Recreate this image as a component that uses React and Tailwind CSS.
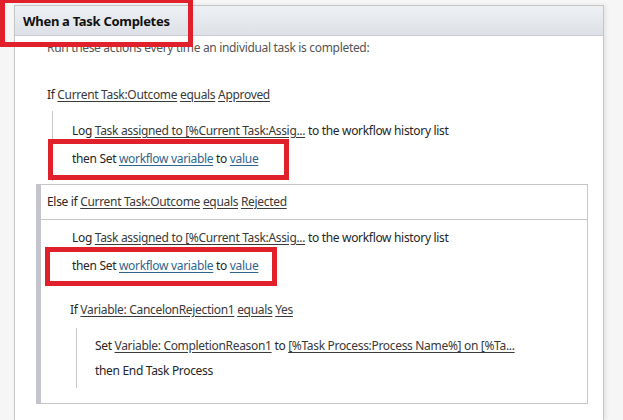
import React from 'react';

const Link = ({ children, blue }) => (
    <span className={`underline underline-offset-2 ${blue ? 'text-[#2f6690] decoration-[#2f6690]' : 'text-[#3a3a3a] decoration-[#3a3a3a]'}`}>
        {children}
    </span>
);

const Row = ({ children, className = '' }) => (
    <div className={`h-[16px] leading-[16px] whitespace-nowrap ${className}`}>{children}</div>
);

const App = () => {
    return (
        <div className="relative w-[623px] h-[420px] overflow-hidden bg-[#f6f6f6] text-[12px] tracking-[-0.32px] text-[#262626]" style={{ fontFamily: '"Noto Sans", "Open Sans", sans-serif' }}>
            <div className="pt-[5px] pl-[14px] pr-[19px] h-full">
                <div className="h-full bg-white border border-b-0 border-[#c6c6c6] shadow-[2px_0_4px_rgba(0,0,0,0.08)]">
                    {/* header */}
                    <div className="h-[30px] pl-[8px] pt-[2px] flex items-center bg-gradient-to-b from-[#eef1f4] to-[#dde1e7] border-b border-[#c9cdd3]">
                        <span className="text-[13px] font-bold tracking-[-0.3px] text-[#111]">When a Task Completes</span>
                    </div>

                    <Row className="mt-[4px] pl-[32px] text-[#555]">Run these actions every time an individual task is completed:</Row>

                    <Row className="mt-[31px] pl-[32px]">
                        If <Link>Current Task:Outcome</Link> <Link>equals</Link> <Link>Approved</Link>
                    </Row>

                    <div className="ml-[37px] mt-[8px] border-l border-[#c8c8c8] pl-[19px] pt-[12px] pb-[14px]">
                        <Row>
                            Log <Link>Task assigned to [%Current Task:Assig...</Link> to the workflow history list
                        </Row>
                        <Row className="mt-[12px]">
                            then Set <Link blue>workflow variable</Link> to <Link blue>value</Link>
                        </Row>
                    </div>

                    {/* else branch */}
                    <div className="ml-[21px] mr-[15px] mt-[3px] border border-l-[5px] border-[#c6c6c6] border-l-[#c4c4cc]">
                        <div className="h-[35px] pl-[6px] flex items-center border-b border-[#c6c6c6] whitespace-nowrap">
                            <span>Else if <Link>Current Task:Outcome</Link> <Link>equals</Link> <Link>Rejected</Link></span>
                        </div>
                        <div className="pt-[10px] pb-[15px]">
                            <Row className="pl-[31px]">
                                Log <Link>Task assigned to [%Current Task:Assig...</Link> to the workflow history list
                            </Row>
                            <Row className="pl-[31px] mt-[12px]">
                                then Set <Link blue>workflow variable</Link> to <Link blue>value</Link>
                            </Row>
                            <Row className="pl-[29px] mt-[28px]">
                                If <Link>Variable: CancelonRejection1</Link> <Link>equals</Link> <Link>Yes</Link>
                            </Row>
                            <div className="ml-[35px] mt-[10px] border-l border-[#c8c8c8] pl-[18px] pt-[10px] pb-[9px]">
                                <Row>
                                    Set <Link>Variable: CompletionReason1</Link> to <Link>[%Task Process:Process Name%] on [%Ta...</Link>
                                </Row>
                                <Row className="mt-[9px]">then End Task Process</Row>
                            </div>
                        </div>
                    </div>
                </div>
            </div>

            {/* annotation boxes */}
            <div className="absolute left-0 top-[-2px] w-[193px] h-[49px] border-[5px] border-[#e0202b]" />
            <div className="absolute left-[48px] top-[139px] w-[241px] h-[41px] border-[5px] border-[#e0202b]" />
            <div className="absolute left-[45px] top-[247px] w-[232px] h-[39px] border-[5px] border-[#e0202b]" />
        </div>
    );
};

export default App;
